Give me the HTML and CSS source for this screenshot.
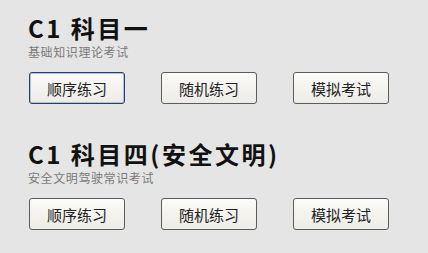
FILE: index.html
```html
<!DOCTYPE html>
<html lang="zh-CN">
<head>
<meta charset="utf-8">
<title>科目练习</title>
<link rel="stylesheet" href="styles.css">
</head>
<body>
<main class="page">
  <section class="subject">
    <h2 class="title">C1 科目一</h2>
    <p class="desc">基础知识理论考试</p>
    <div class="actions">
      <button class="btn btn-focus" type="button">顺序练习</button>
      <button class="btn" type="button">随机练习</button>
      <button class="btn" type="button">模拟考试</button>
    </div>
  </section>
  <section class="subject">
    <h2 class="title">C1 科目四(安全文明)</h2>
    <p class="desc">安全文明驾驶常识考试</p>
    <div class="actions">
      <button class="btn" type="button">顺序练习</button>
      <button class="btn" type="button">随机练习</button>
      <button class="btn" type="button">模拟考试</button>
    </div>
  </section>
</main>
</body>
</html>
```

FILE: styles.css
```css
html, body {
  margin: 0;
  padding: 0;
  background: #e5e5e5;
}

.page {
  padding: 15px 0 0 28px;
  display: flex;
  flex-direction: column;
  gap: 37px;
  font-family: "Noto Sans CJK SC", "Noto Sans", sans-serif;
}

.subject {
  display: flex;
  flex-direction: column;
}

.title {
  margin: 0;
  font-size: 24px;
  line-height: 26px;
  font-weight: 700;
  letter-spacing: 2.5px;
  color: #111;
}

.desc {
  margin: 5px 0 0 0;
  font-family: "Liberation Sans", "Noto Sans CJK SC", sans-serif;
  font-size: 12px;
  line-height: 14px;
  letter-spacing: 0.6px;
  color: #7a7a7a;
}

.actions {
  margin-top: 12px;
  padding-left: 1px;
  display: flex;
  gap: 36px;
}

.btn {
  width: 96px;
  height: 32px;
  padding: 0;
  border: 1px solid #5c5c5c;
  border-radius: 3px;
  background: linear-gradient(#fbfbf9, #ecebe5);
  font-family: "Noto Sans CJK SC", "Noto Sans", sans-serif;
  font-size: 15px;
  color: #222;
}

.btn-focus {
  border-color: #2a3d6c;
  box-shadow: inset 0 0 0 1px #a9c2e8;
}
```
